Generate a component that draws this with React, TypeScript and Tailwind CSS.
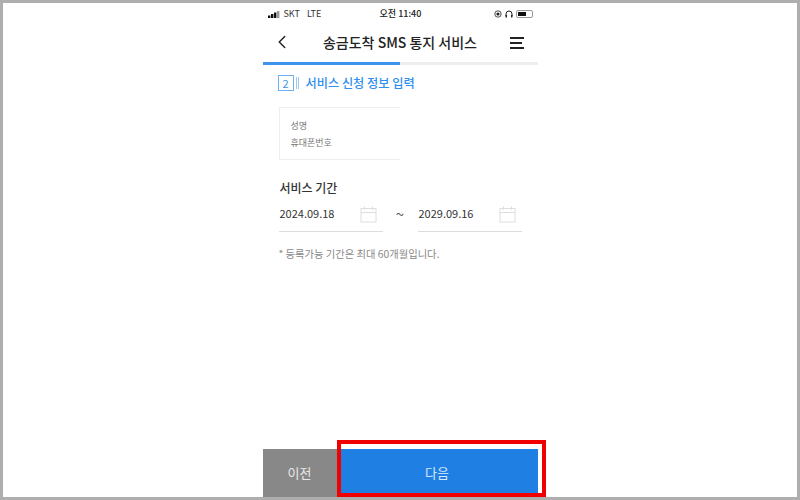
import { ChevronLeft } from "lucide-react";

const FONT = "font-['Noto_Sans_CJK_KR','Noto_Sans',sans-serif]";

function CalendarIcon() {
  return (
    <svg width="17" height="17" viewBox="0 0 17 17" fill="none" stroke="#dedede" strokeWidth="1">
      <rect x="1" y="2.5" width="15" height="13.5" />
      <path d="M1 6.5H16M4.5 0.5V4M12.5 0.5V4" />
    </svg>
  );
}

function StatusBar() {
  return (
    <div className="flex h-[20px] items-center justify-between pl-[5px] pr-[4px] text-[9px] text-[#333]">
      <div className="flex w-[90px] items-center gap-[3px]">
        <svg width="13" height="7" viewBox="0 0 13 7" fill="#111">
          <rect x="0" y="4.5" width="2.4" height="2.5" />
          <rect x="3" y="3" width="2.4" height="4" />
          <rect x="6" y="1.5" width="2.4" height="5.5" />
          <rect x="9" y="0" width="2.4" height="7" fill="#999" />
        </svg>
        <span>SKT</span>
        <span className="ml-[4px]">LTE</span>
      </div>
      <span className="text-[9px] font-medium text-[#222]">오전 11:40</span>
      <div className="flex w-[90px] items-center justify-end gap-[3px]">
        <svg width="8" height="8" viewBox="0 0 8 8" fill="none" stroke="#222">
          <circle cx="4" cy="4" r="3.2" strokeWidth="0.8" />
          <circle cx="4" cy="4" r="1.6" fill="#222" stroke="none" />
        </svg>
        <svg width="8" height="8" viewBox="0 0 8 8" fill="none" stroke="#222">
          <path d="M1 6V4a3 3 0 0 1 6 0v2" strokeWidth="1" />
          <rect x="0.5" y="5" width="1.5" height="2.5" fill="#222" stroke="none" />
          <rect x="6" y="5" width="1.5" height="2.5" fill="#222" stroke="none" />
        </svg>
        <div className="flex h-[8px] w-[17px] rounded-[2px] border border-[#999] p-px">
          <div className="h-full w-[8px] bg-[#111]" />
        </div>
      </div>
    </div>
  );
}

export default function App() {
  return (
    <div className={`relative flex h-[500px] w-[800px] justify-center overflow-hidden border-[3px] border-[#aeaeae] bg-white ${FONT}`}>
      <div className="flex h-full w-[275px] flex-col pt-px">
        <StatusBar />

        <div className="relative flex h-[38px] items-center justify-center pb-[2px]">
          <ChevronLeft size={22} strokeWidth={1.6} className="absolute left-[8px] top-[7px] text-[#222]" />
          <h1 className="text-[14px] font-medium text-[#222]">송금도착 SMS 통지 서비스</h1>
          <div className="absolute right-[14px] top-[13px] flex w-[14px] flex-col gap-[3.5px]">
            <div className="h-[1.5px] bg-[#222]" />
            <div className="h-[1.5px] w-[12px] bg-[#222]" />
            <div className="h-[1.5px] bg-[#222]" />
          </div>
        </div>

        <div className="flex h-[3px] bg-[#eeeeee]">
          <div className="w-[137px] bg-[#3d94ea]" />
        </div>

        <div className="mt-[9px] flex items-center gap-[2px] pl-[15px]">
          <div className="flex h-[16px] w-[16px] items-center justify-center border border-[#6fb0f0] text-[11px] leading-none text-[#3d94ea]">
            2
          </div>
          <div className="mr-[5px] h-[12px] w-[3px] border-x border-[#9cc8f4]" />
          <span className="text-[12.2px] font-medium text-[#2f8fee]">서비스 신청 정보 입력</span>
        </div>

        <div className="ml-[16px] mt-[15px] flex h-[53px] w-[121px] flex-col justify-center gap-[4px] border-y border-l border-[#eeeeee] pl-[11px] pt-px text-[9px] text-[#777]">
          <span>성명</span>
          <span>휴대폰번호</span>
        </div>

        <h2 className="ml-[17px] mt-[19px] text-[12px] font-medium leading-[18px] text-[#333]">서비스 기간</h2>

        <div className="ml-[16px] mt-[6px] flex items-start">
          <div className="flex h-[29px] w-[104px] items-start justify-between border-b border-[#dddddd] pl-px pr-[6px] pt-[3px]">
            <span className="text-[11px] leading-[15px] text-[#333]">2024.09.18</span>
            <CalendarIcon />
          </div>
          <span className="w-[35px] pt-[2px] text-center text-[15px] leading-[18px] text-[#555]">~</span>
          <div className="flex h-[29px] w-[104px] items-start justify-between border-b border-[#dddddd] pl-px pr-[6px] pt-[3px]">
            <span className="text-[11px] leading-[15px] text-[#333]">2029.09.16</span>
            <CalendarIcon />
          </div>
        </div>

        <p className="ml-[16px] mt-[14px] text-[10.3px] leading-[15px] text-[#888]">* 등록가능 기간은 최대 60개월입니다.</p>

        <div className="mt-auto flex h-[48px]">
          <button className="w-[74px] bg-[#888888] text-[13px] text-[#e8e8e8]">이전</button>
          <button className="w-[201px] bg-[#1f7fe3] text-[13px] text-[#d8e9fb]">다음</button>
        </div>
      </div>

      {/* red highlight drawn over the next button */}
      <div className="absolute left-[334px] top-[437px] h-[57px] w-[209px] border-[4px] border-[#f00000]" />
    </div>
  );
}
